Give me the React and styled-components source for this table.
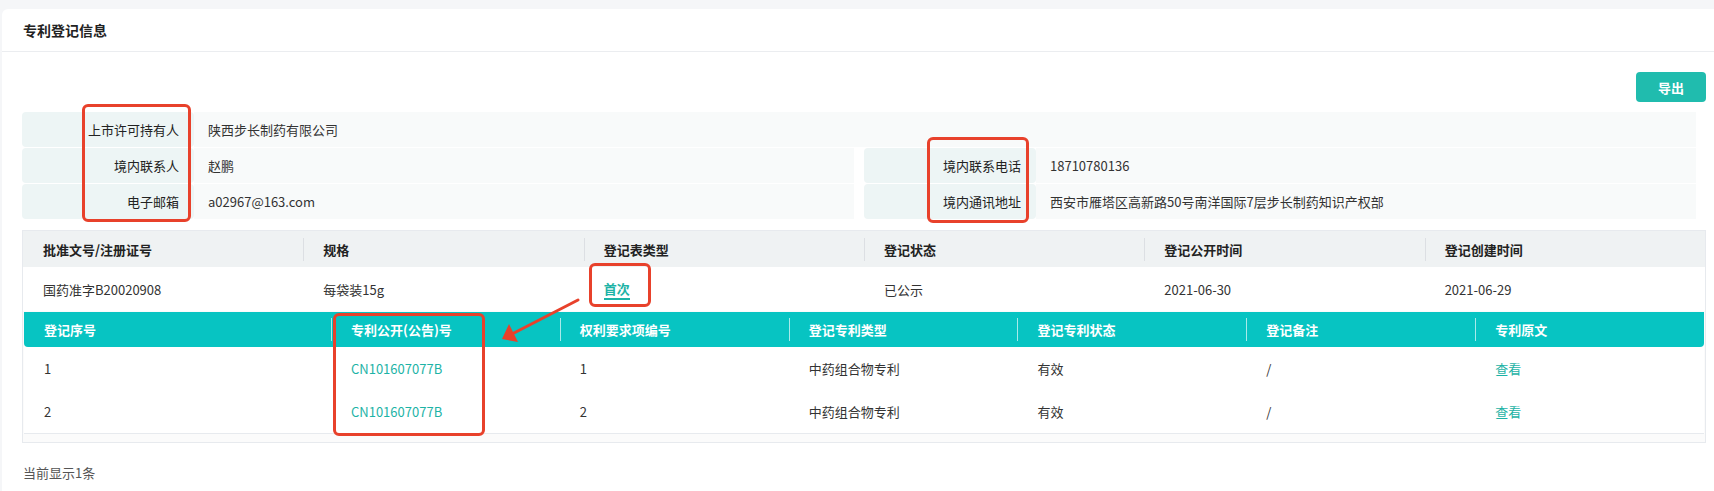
import React from "react";
import styled, { createGlobalStyle } from "styled-components";

const GlobalStyle = createGlobalStyle`
  html, body {
    margin: 0;
    padding: 0;
    background: #f5f6f8;
    font-family: "Noto Sans CJK SC", "Noto Sans", sans-serif;
    color: #333;
  }
`;

const Page = styled.div`
  position: relative;
  padding: 9px 0 0 2px;
  min-height: 482px;
`;

const Card = styled.div`
  background: #fff;
  border-radius: 6px 0 0 0;
  min-height: 482px;
`;

const CardHeader = styled.div`
  height: 42px;
  display: flex;
  align-items: center;
  padding-left: 21px;
  border-bottom: 1px solid #ebedf0;
  font-size: 14px;
  font-weight: 700;
  color: #222;
`;

const CardBody = styled.div`
  padding: 20px 8px 0 20px;
`;

const Toolbar = styled.div`
  display: flex;
  justify-content: flex-end;
  margin-bottom: 10px;
`;

const ExportButton = styled.button`
  width: 70px;
  height: 30px;
  border: none;
  border-radius: 4px;
  background: #20bcae;
  color: #fff;
  font-family: inherit;
  font-size: 13px;
  font-weight: 700;
  cursor: pointer;
`;

const InfoBlock = styled.div`
  display: flex;
  flex-direction: column;
  gap: 1px;
  margin-right: 10px;
`;

const InfoRow = styled.div`
  display: flex;
  gap: 10px;
  height: 35px;
`;

const InfoPair = styled.div`
  flex: 1;
  display: flex;
  min-width: 0;
`;

const InfoLabel = styled.div`
  width: 172px;
  flex-shrink: 0;
  display: flex;
  align-items: center;
  justify-content: flex-end;
  padding-right: 15px;
  box-sizing: border-box;
  background: #edf5f5;
  border-radius: 4px;
  font-size: 13px;
  color: #222;
`;

const InfoValue = styled.div`
  flex: 1;
  display: flex;
  align-items: center;
  padding-left: 14px;
  background: #f8fafa;
  font-size: 13px;
  color: #333;
`;

const Table = styled.div`
  margin-top: 11px;
  border: 1px solid #e7eaee;
`;

const MainGrid = styled.div`
  display: grid;
  grid-template-columns: repeat(6, 1fr);
  height: ${(p) => (p.$head ? "36px" : "44px")};
  background: ${(p) => (p.$head ? "#eff2f3" : "#fff")};
  font-size: 13px;
  font-weight: ${(p) => (p.$head ? 700 : 400)};
  color: ${(p) => (p.$head ? "#222" : "#333")};
`;

const SubGrid = styled.div`
  display: grid;
  grid-template-columns: 307px repeat(6, 1fr);
  height: ${(p) => (p.$head ? "35px" : "43px")};
  background: ${(p) => (p.$head ? "#07c4c2" : "#fff")};
  border-radius: ${(p) => (p.$head ? "0 0 4px 4px" : "0")};
  font-size: 13px;
  font-weight: ${(p) => (p.$head ? 700 : 400)};
  color: ${(p) => (p.$head ? "#fff" : "#333")};
`;

const Cell = styled.div`
  position: relative;
  display: flex;
  align-items: center;
  padding-left: 20px;
  white-space: nowrap;

  ${(p) =>
    p.$sep &&
    `&::before {
      content: "";
      position: absolute;
      left: 0;
      top: 50%;
      height: 23px;
      margin-top: -11.5px;
      width: 1px;
      background: ${p.$sep};
    }`}
`;

const Expanded = styled.div`
  background: #fbfbfb;
  padding: 1px 1px 8px 1px;
`;

const SubTable = styled.div`
  background: #fff;
  border-bottom: 1px solid #e7eaee;
`;

const LinkText = styled.span`
  color: #1db3a6;
  cursor: pointer;
`;

const TypeLink = styled.span`
  color: #1db3a6;
  font-weight: 700;
  border-bottom: 2px solid #1db3a6;
  line-height: 18px;
  margin-top: 2px;
`;

const Footer = styled.div`
  margin-top: 20px;
  font-size: 13px;
  color: #555;
  line-height: 20px;
  padding-left: 1px;
`;

const Mark = styled.div`
  position: absolute;
  left: ${(p) => p.$x}px;
  top: ${(p) => p.$y}px;
  width: ${(p) => p.$w}px;
  height: ${(p) => p.$h}px;
  border: 3px solid #e8412b;
  border-radius: 6px;
  box-sizing: border-box;
  pointer-events: none;
`;

const ArrowLayer = styled.svg`
  position: absolute;
  left: 0;
  top: 0;
  pointer-events: none;
`;

const mainHead = ["批准文号/注册证号", "规格", "登记表类型", "登记状态", "登记公开时间", "登记创建时间"];
const subHead = ["登记序号", "专利公开(公告)号", "权利要求项编号", "登记专利类型", "登记专利状态", "登记备注", "专利原文"];
const subRows = [
  { no: "1", pub: "CN101607077B", claim: "1", type: "中药组合物专利", status: "有效", note: "/" },
  { no: "2", pub: "CN101607077B", claim: "2", type: "中药组合物专利", status: "有效", note: "/" },
];

const App = () => {
  return (
    <Page>
      <GlobalStyle />
      <Card>
        <CardHeader>专利登记信息</CardHeader>
        <CardBody>
          <Toolbar>
            <ExportButton>导出</ExportButton>
          </Toolbar>
          <InfoBlock>
            <InfoRow>
              <InfoPair>
                <InfoLabel>上市许可持有人</InfoLabel>
                <InfoValue>陕西步长制药有限公司</InfoValue>
              </InfoPair>
            </InfoRow>
            <InfoRow>
              <InfoPair>
                <InfoLabel>境内联系人</InfoLabel>
                <InfoValue>赵鹏</InfoValue>
              </InfoPair>
              <InfoPair>
                <InfoLabel>境内联系电话</InfoLabel>
                <InfoValue>18710780136</InfoValue>
              </InfoPair>
            </InfoRow>
            <InfoRow>
              <InfoPair>
                <InfoLabel>电子邮箱</InfoLabel>
                <InfoValue>a02967@163.com</InfoValue>
              </InfoPair>
              <InfoPair>
                <InfoLabel>境内通讯地址</InfoLabel>
                <InfoValue>西安市雁塔区高新路50号南洋国际7层步长制药知识产权部</InfoValue>
              </InfoPair>
            </InfoRow>
          </InfoBlock>

          <Table>
            <MainGrid $head>
              {mainHead.map((h, i) => (
                <Cell key={h} $sep={i > 0 ? "#dcdfe3" : null}>
                  {h}
                </Cell>
              ))}
            </MainGrid>
            <MainGrid>
              <Cell>国药准字B20020908</Cell>
              <Cell>每袋装15g</Cell>
              <Cell>
                <TypeLink>首次</TypeLink>
              </Cell>
              <Cell>已公示</Cell>
              <Cell>2021-06-30</Cell>
              <Cell>2021-06-29</Cell>
            </MainGrid>
            <Expanded>
              <SubTable>
                <SubGrid $head>
                  {subHead.map((h, i) => (
                    <Cell key={h} $sep={i > 0 ? "rgba(255,255,255,0.65)" : null}>
                      {h}
                    </Cell>
                  ))}
                </SubGrid>
                {subRows.map((r) => (
                  <SubGrid key={r.no}>
                    <Cell>{r.no}</Cell>
                    <Cell>
                      <LinkText>{r.pub}</LinkText>
                    </Cell>
                    <Cell>{r.claim}</Cell>
                    <Cell>{r.type}</Cell>
                    <Cell>{r.status}</Cell>
                    <Cell>{r.note}</Cell>
                    <Cell>
                      <LinkText>查看</LinkText>
                    </Cell>
                  </SubGrid>
                ))}
              </SubTable>
            </Expanded>
          </Table>
          <Footer>当前显示1条</Footer>
        </CardBody>
      </Card>

      {/* annotation marks drawn over the screenshot */}
      <Mark $x={82} $y={104} $w={109} $h={118} />
      <Mark $x={927} $y={137} $w={102} $h={86} />
      <Mark $x={589} $y={263} $w={62} $h={44} />
      <Mark $x={333} $y={313} $w={152} $h={123} />
      <ArrowLayer width="700" height="400">
        <line x1="578" y1="300" x2="512" y2="334" stroke="#e8412b" strokeWidth="3" strokeLinecap="round" />
        <polygon points="502,339 509,324 518,342" fill="#e8412b" />
      </ArrowLayer>
    </Page>
  );
};

export default App;
